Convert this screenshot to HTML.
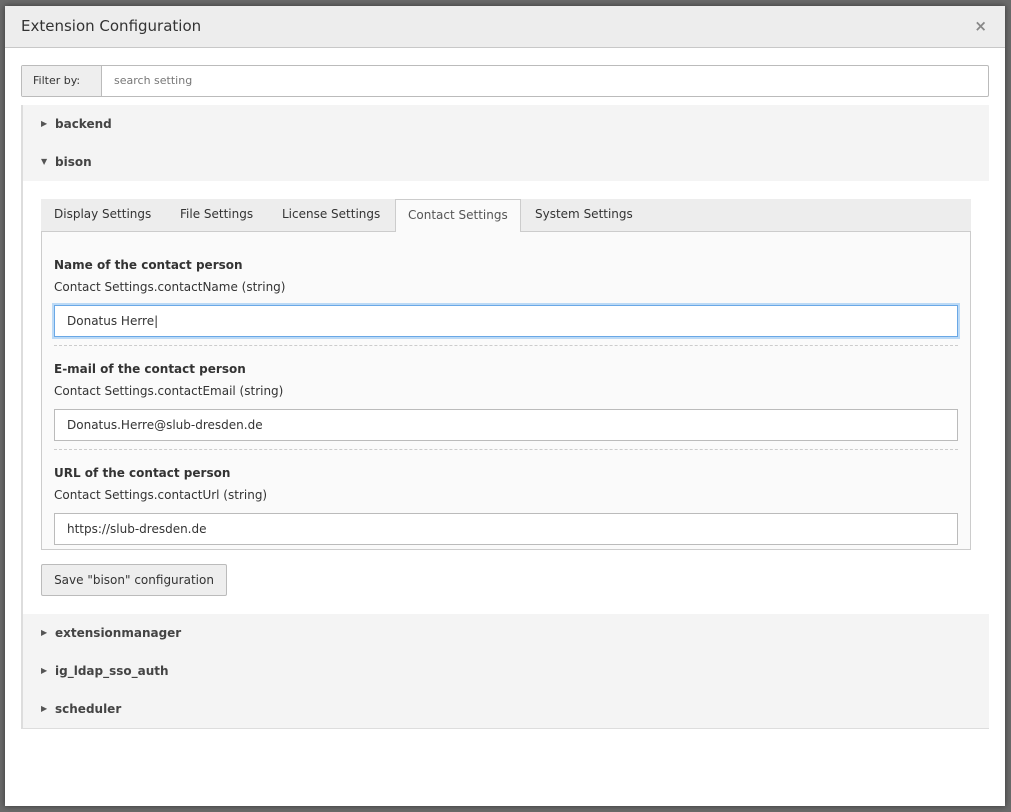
<!DOCTYPE html>
<html><head><meta charset="utf-8"><style>
*{box-sizing:border-box;margin:0;padding:0}
body{width:1011px;height:812px;background:#6b6b6b;font-family:"DejaVu Sans",Verdana,sans-serif;font-size:11px;color:#333;position:relative;overflow:hidden}
.abs{position:absolute}
.modal{left:5px;top:6px;width:1000px;height:800px;background:#fff;box-shadow:0 0 6px rgba(0,0,0,.5)}
.hdr{left:0;top:0;width:1000px;height:42px;background:#ededed;border-bottom:1px solid #c8c8c8}
.title{left:16px;top:11px;font-size:15px;color:#333}
.close{right:18px;top:11px;font-size:15px;color:#888;font-weight:bold}
.filter{left:16px;top:59px;width:968px;height:32px;border:1px solid #bbb;border-radius:2px;display:flex}
.filter .l{width:80px;background:#eee;border-right:1px solid #bbb;line-height:30px;padding-left:11px}
.filter .i{line-height:30px;padding-left:12px;color:#777}
.panel{left:16px;top:99px;width:968px;height:624px;border-left:2px solid #ddd;border-bottom:2px solid #ddd;background:#fff}
.row{position:absolute;left:0;width:966px;height:38px;background:#f4f4f4;font-weight:bold;font-size:12px;line-height:38px;padding-left:32px;color:#444}
.row .ar{position:absolute;left:18px;top:0;font-size:8px;color:#555}
.tabs{left:18px;top:94px;width:930px;height:33px;background:#ededed;border-bottom:1px solid #ccc}
.tab{position:absolute;top:0;height:33px;line-height:31px;font-size:12px}
.tab.act{background:#fafafa;border:1px solid #ccc;border-bottom:none;color:#555;height:33px}
.box{left:18px;top:127px;width:930px;height:318px;background:#fafafa;border:1px solid #ccc;border-top:none}
.lab{position:absolute;left:12px;font-weight:bold;font-size:12px}
.desc{position:absolute;left:12px;font-size:12px}
.inp{position:absolute;left:12px;width:904px;height:32px;border:1px solid #bbb;background:#fff;line-height:30px;padding-left:12px;font-size:12px}
.inp.f{border-color:#6aa8e6;box-shadow:0 0 0 2px #bcdaf6}
.sep{position:absolute;left:12px;width:904px;border-top:1px dashed #ccc}
.btn{left:18px;top:459px;width:186px;height:32px;background:#eee;border:1px solid #bbb;border-radius:2px;line-height:30px;text-align:center;font-size:12px}
</style></head><body>
<div class="abs modal">
 <div class="abs hdr"><div class="abs title">Extension Configuration</div><div class="abs close">×</div></div>
 <div class="abs filter"><div class="l">Filter by:</div><div class="i">search setting</div></div>
 <div class="abs panel">
  <div class="row" style="top:0"><span class="ar">▶</span>backend</div>
  <div class="row" style="top:38px"><span class="ar">▼</span>bison</div>
  <div class="abs tabs">
   <div class="tab" style="left:13px">Display Settings</div>
   <div class="tab" style="left:139px">File Settings</div>
   <div class="tab" style="left:241px">License Settings</div>
   <div class="tab act" style="left:354px;width:126px;padding-left:12px">Contact Settings</div>
   <div class="tab" style="left:494px">System Settings</div>
  </div>
  <div class="abs box">
   <div class="lab" style="top:26px">Name of the contact person</div>
   <div class="desc" style="top:48px">Contact Settings.contactName (string)</div>
   <div class="inp f" style="top:73px">Donatus Herre|</div>
   <div class="sep" style="top:113px"></div>
   <div class="lab" style="top:130px">E-mail of the contact person</div>
   <div class="desc" style="top:152px">Contact Settings.contactEmail (string)</div>
   <div class="inp" style="top:177px">Donatus.Herre@slub-dresden.de</div>
   <div class="sep" style="top:217px"></div>
   <div class="lab" style="top:234px">URL of the contact person</div>
   <div class="desc" style="top:256px">Contact Settings.contactUrl (string)</div>
   <div class="inp" style="top:281px">https://slub-dresden.de</div>
  </div>
  <div class="abs btn">Save "bison" configuration</div>
  <div class="row" style="top:509px"><span class="ar">▶</span>extensionmanager</div>
  <div class="row" style="top:547px"><span class="ar">▶</span>ig_ldap_sso_auth</div>
  <div class="row" style="top:585px"><span class="ar">▶</span>scheduler</div>
 </div>
</div>
</body></html>
